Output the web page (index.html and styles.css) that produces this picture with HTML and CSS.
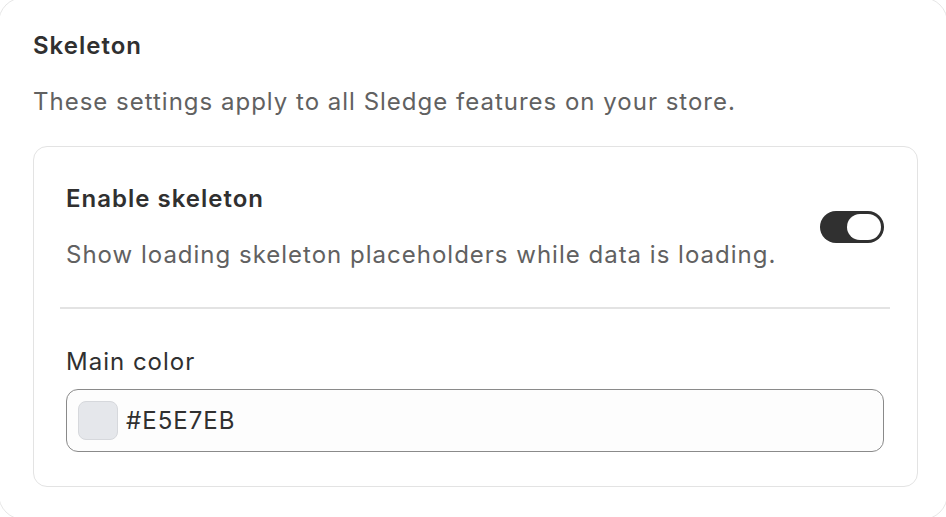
FILE: index.html
```html
<!DOCTYPE html>
<html>
<head>
<meta charset="utf-8">
<link rel="stylesheet" href="styles.css">
</head>
<body>
<div class="outer">
  <h2 class="title">Skeleton</h2>
  <p class="desc">These settings apply to all Sledge features on your store.</p>
  <div class="inner">
    <div class="row">
      <div class="row-text">
        <h3 class="row-title">Enable skeleton</h3>
        <p class="row-desc">Show loading skeleton placeholders while data is loading.</p>
      </div>
      <div class="toggle"><span class="knob"></span></div>
    </div>
    <div class="divider"></div>
    <div class="field">
      <label class="label">Main color</label>
      <div class="input">
        <span class="swatch"></span>
        <span class="value">#E5E7EB</span>
      </div>
    </div>
  </div>
</div>
</body>
</html>
```
FILE: styles.css
```css
html, body {
  margin: 0;
  padding: 0;
  background: #ffffff;
  overflow: hidden;
  width: 946px;
  height: 517px;
}
body {
  font-family: Inter, "Noto Sans", sans-serif;
  color: #303030;
  font-size: 24px;
  letter-spacing: 1px;
}
.outer {
  margin: -3px -2px 0 -2px;
  height: 523px;
  box-sizing: border-box;
  border: 1px solid #e6e6e6;
  border-radius: 26px;
  padding: 33px 30px 0 34px;
  background: #fff;
}
.title {
  margin: 0;
  font-size: 24px;
  line-height: 30px;
  font-weight: 600;
}
.desc {
  margin: 26px 0 0 0;
  font-size: 24px;
  line-height: 30px;
  color: #616161;
}
.inner {
  margin-top: 29px;
  width: 885px;
  height: 341px;
  box-sizing: border-box;
  border: 1.5px solid #e3e3e3;
  border-radius: 14px;
  padding: 37px 32px 0 32px;
}
.row {
  display: flex;
  align-items: center;
  justify-content: space-between;
}
.row-title {
  margin: 0;
  font-size: 24px;
  line-height: 30px;
  font-weight: 600;
}
.row-desc {
  margin: 26px 0 0 0;
  font-size: 24px;
  line-height: 30px;
  color: #616161;
}
.toggle {
  width: 64px;
  height: 32px;
  border-radius: 16px;
  background: #303030;
  position: relative;
  margin-right: 1px;
}
.knob {
  position: absolute;
  right: 3px;
  top: 3px;
  width: 34px;
  height: 26px;
  border-radius: 13px;
  background: #fff;
}
.divider {
  height: 2px;
  background: #e3e3e3;
  margin: 37px -5px 0 -6px;
}
.field {
  margin-top: 38px;
}
.label {
  display: block;
  font-size: 24px;
  line-height: 30px;
}
.input {
  margin-top: 12px;
  height: 63px;
  box-sizing: border-box;
  border: 1px solid #8a8a8a;
  border-radius: 12px;
  background: #fdfdfd;
  display: flex;
  align-items: center;
  padding-left: 11px;
  margin-right: 1px;
}
.swatch {
  width: 40px;
  height: 39px;
  box-sizing: border-box;
  border-radius: 8px;
  background: #e5e7eb;
  border: 1px solid #d6d8dc;
}
.value {
  margin-left: 8px;
  font-size: 24px;
  line-height: 30px;
  color: #303030;
}
```
